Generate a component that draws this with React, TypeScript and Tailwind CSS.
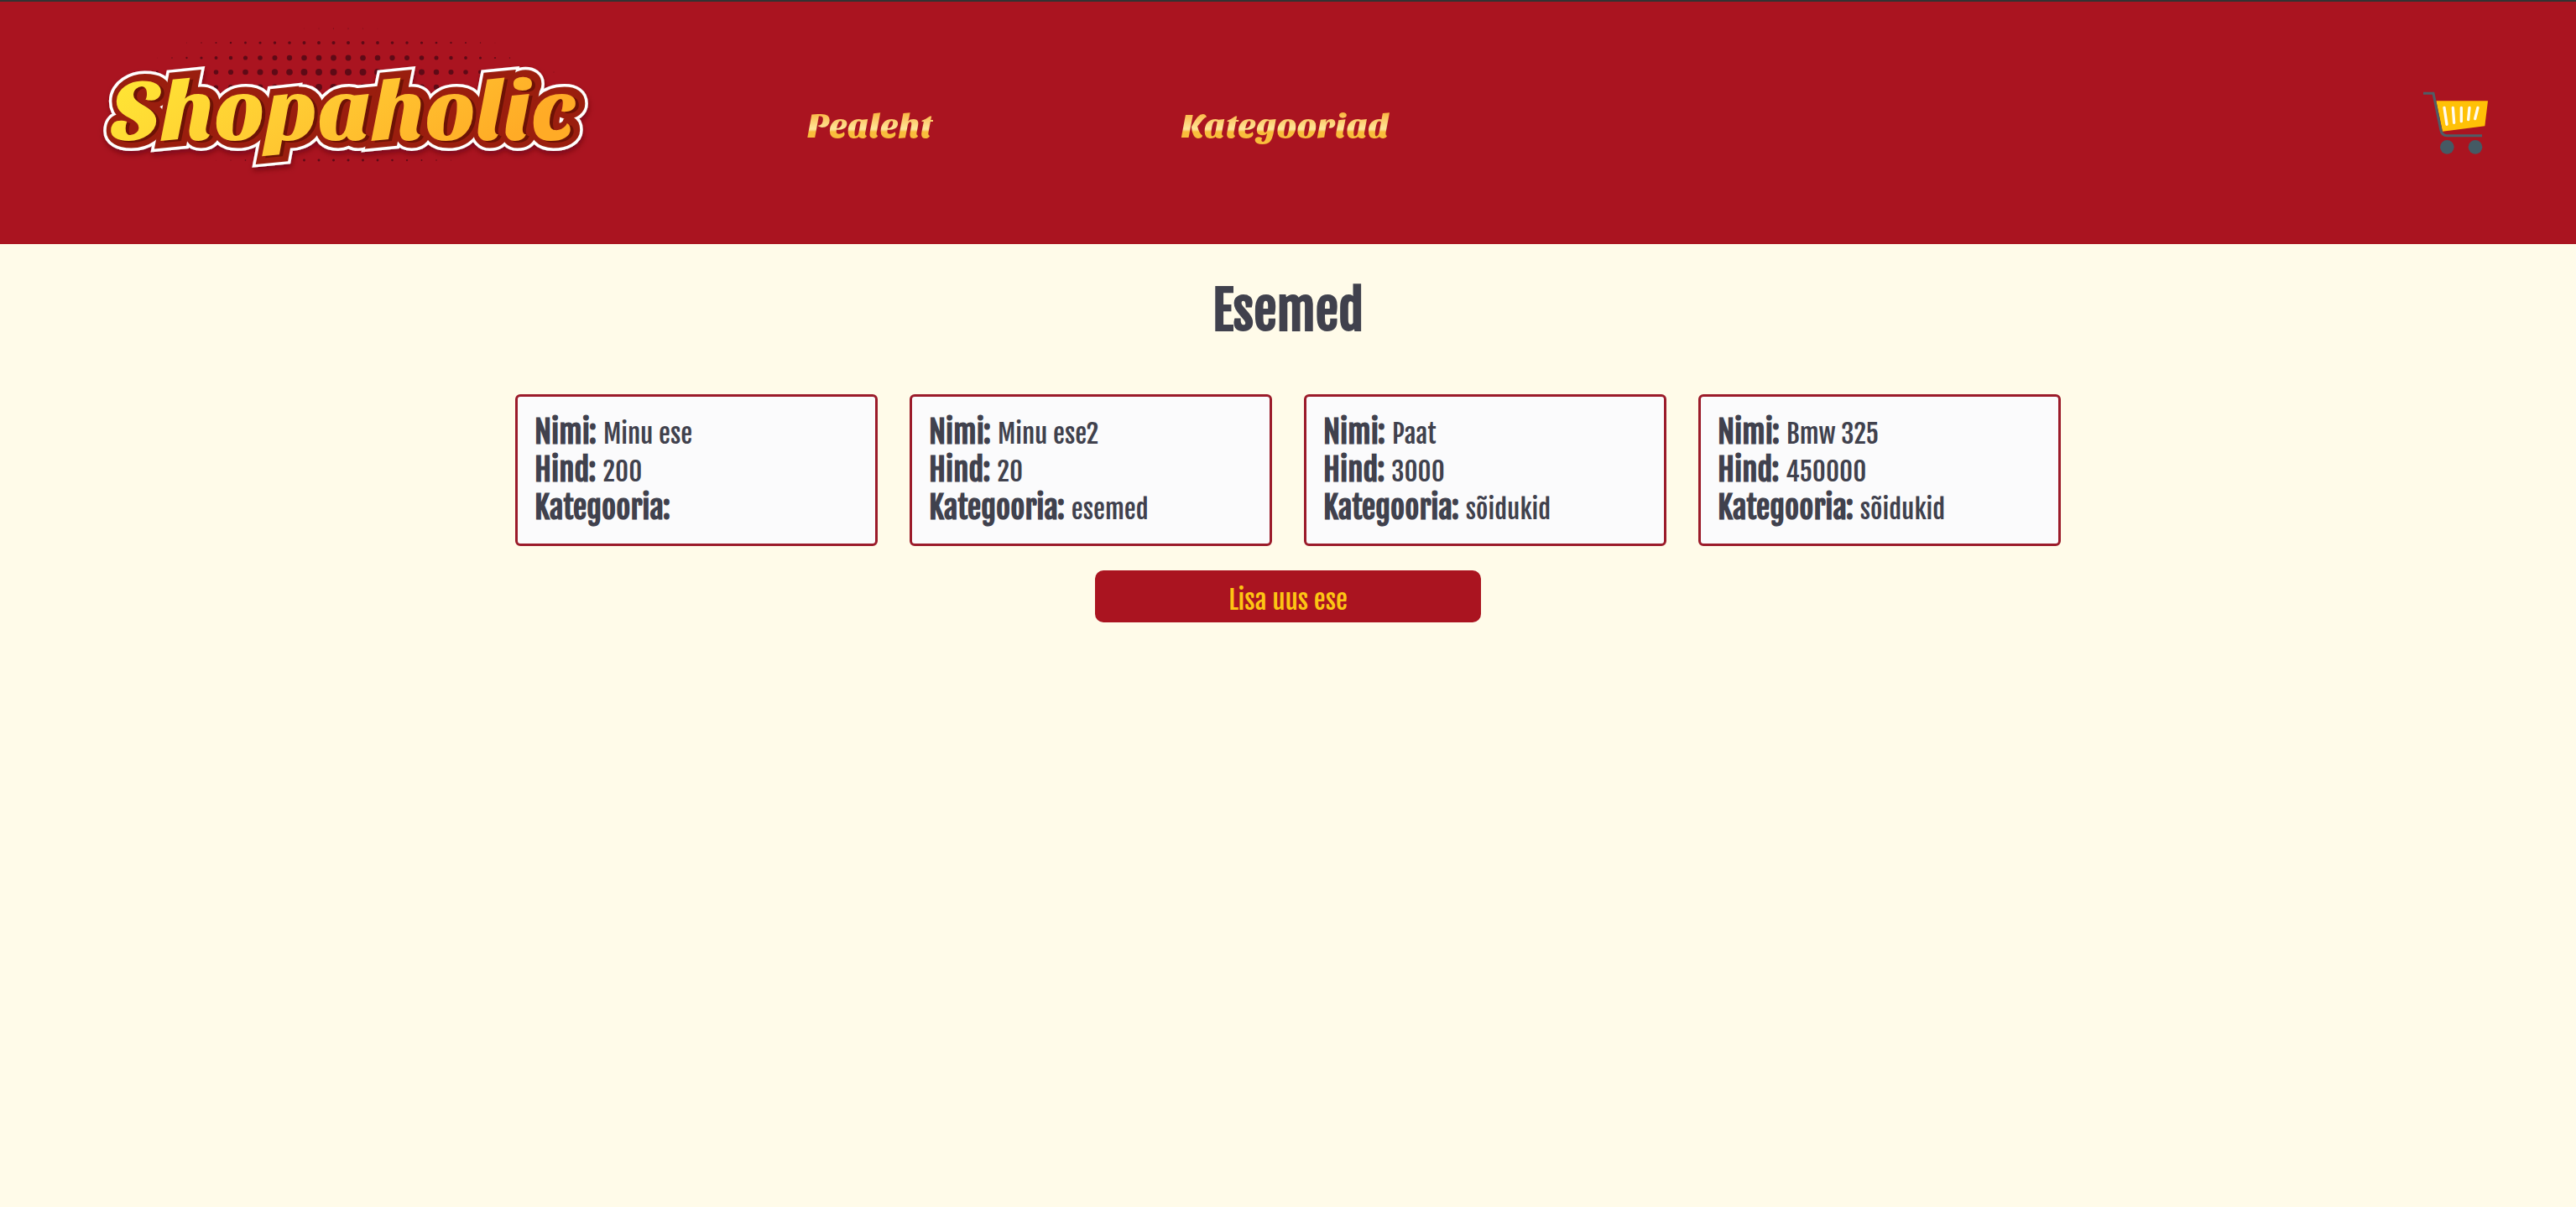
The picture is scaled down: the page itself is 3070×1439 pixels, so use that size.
type Item = { name: string; price: string; category: string };

const items: Item[] = [
  { name: "Minu ese", price: "200", category: "" },
  { name: "Minu ese2", price: "20", category: "esemed" },
  { name: "Paat", price: "3000", category: "sõidukid" },
  { name: "Bmw 325", price: "450000", category: "sõidukid" },
];

// Halftone rows behind the logo: vertical position, half width and largest dot radius.
const dotRows = [
  { y: 32, half: 60, max: 0.6 },
  { y: 49, half: 205, max: 2 },
  { y: 67, half: 225, max: 3.4 },
  { y: 84, half: 270, max: 4 },
  { y: 102, half: 250, max: 4 },
  { y: 189, half: 160, max: 1.5 },
];

const dots = dotRows.flatMap(({ y, half, max }) =>
  Array.from({ length: 32 }, (_, i) => 17.5 + i * 17.5)
    .map((x) => ({ x, y, r: max * (1 - ((x - 305) / half) ** 2) }))
    .filter((dot) => dot.r > 0.2),
);

function Logo() {
  return (
    <svg
      viewBox="0 0 640 289"
      className="block w-[640px] font-['Sansita_One','Lato',sans-serif] text-[102px]"
      role="img"
      aria-label="Shopaholic"
    >
      <defs>
        <linearGradient id="logo-fill" x1="0" y1="0" x2="1" y2="0.3">
          <stop offset="0" stopColor="#ffea35" />
          <stop offset="0.5" stopColor="#ffcb33" />
          <stop offset="1" stopColor="#ffab26" />
        </linearGradient>
        <filter id="logo-shadow" x="-10%" y="-30%" width="120%" height="160%">
          <feDropShadow dx="1" dy="4" stdDeviation="3" floodColor="#5a0610" floodOpacity="0.6" />
        </filter>
      </defs>
      {dots.map((dot) => (
        <circle key={`${dot.x}-${dot.y}`} cx={dot.x} cy={dot.y} r={dot.r} fill="#5e0a16" />
      ))}
      <g aria-hidden="true">
        <text x="35" y="164" fill="#fff" stroke="#fff" strokeWidth="24" filter="url(#logo-shadow)">
          Shopaholic
        </text>
        <text x="35" y="164" fill="#9a1e0e" stroke="#9a1e0e" strokeWidth="17">
          Shopaholic
        </text>
        <text x="36" y="166" fill="#6d1206">
          Shopaholic
        </text>
      </g>
      <text x="32" y="164" fill="url(#logo-fill)">
        Shopaholic
      </text>
    </svg>
  );
}

function CartIcon() {
  return (
    <svg viewBox="84 56 234 226" className="block w-[78px]" fill="none" aria-hidden="true">
      <path d="M130 90H315L304 180L153 199Z" fill="#ffc107" />
      <path
        d="M159 114L168 174M190 114L194 168M220 114V163M249 114L245 157M279 114L269 154"
        stroke="#fffaf0"
        strokeWidth="10"
        strokeLinecap="round"
      />
      <path d="M84 63H120L147 196Q151 214 168 214H294" stroke="#4f5d66" strokeWidth="9" />
      <circle cx="169" cy="255" r="25" fill="#455a64" />
      <circle cx="270" cy="255" r="25" fill="#455a64" />
    </svg>
  );
}

function NavLink({ children }: { children: string }) {
  return (
    <a
      href="#"
      className="bg-linear-to-b from-[#f9b233] from-20% via-[#ffe79a] via-55% to-[#f9bd3c] to-60% bg-clip-text font-['Sansita_One','Lato',sans-serif] text-[41px] leading-[60px] text-transparent"
    >
      {children}
    </a>
  );
}

function Field({ label, value }: { label: string; value: string }) {
  return (
    <div className="flex items-baseline gap-2 leading-[43px]">
      <dt className="text-[37px] font-bold">{label}</dt>
      <dd className="text-[31px]">{value}</dd>
    </div>
  );
}

export default function App() {
  return (
    <div className="min-h-screen bg-[#fffbe9] font-['Fjalla_One','Roboto_Condensed',sans-serif] text-[#40414d]">
      <header className="flex items-center border-t-2 border-[#333333] bg-[#aa1420] pr-[104px] pl-[100px]">
        <a href="#">
          <Logo />
        </a>
        <nav className="ml-[222px] flex flex-1 gap-[296px] pt-2">
          <NavLink>Pealeht</NavLink>
          <NavLink>Kategooriad</NavLink>
        </nav>
        <button type="button" aria-label="Ostukorv">
          <CartIcon />
        </button>
      </header>
      <main className="mx-auto flex w-[60%] flex-col items-center">
        <h1 className="pt-[39px] text-[62px] leading-[80px] font-bold">Esemed</h1>
        <ul className="mt-[60px] grid w-full grid-cols-4 gap-[38px]">
          {items.map((item) => (
            <li
              key={item.name}
              className="rounded-md border-3 border-[#9b1b2a] bg-[#fbfbfc] px-5 pt-[21px] pb-[19px]"
            >
              <dl>
                <Field label="Nimi:" value={item.name} />
                <Field label="Hind:" value={item.price} />
                <Field label="Kategooria:" value={item.category} />
              </dl>
            </li>
          ))}
        </ul>
        <button
          type="button"
          className="mt-[29px] w-1/4 rounded-[10px] bg-[#aa1420] pt-4 pb-1.5 text-[31px] leading-10 text-[#fdc513]"
        >
          Lisa uus ese
        </button>
      </main>
    </div>
  );
}
